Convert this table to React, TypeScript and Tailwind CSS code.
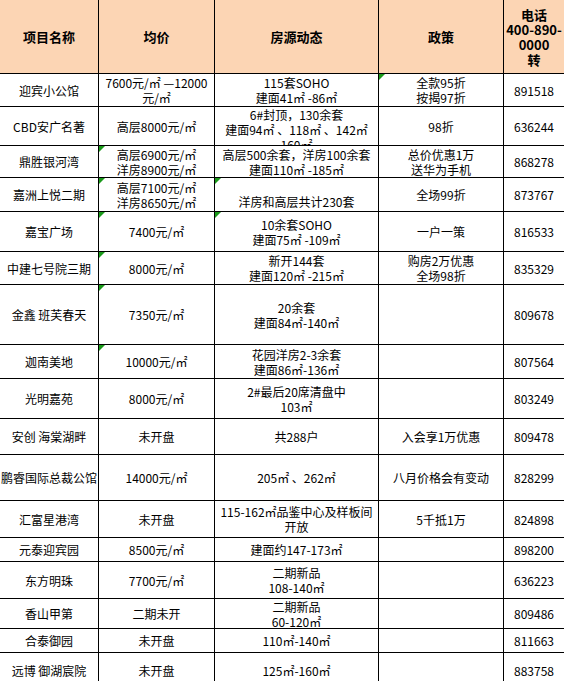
type Row = {
  h: string;
  name: string;
  price: string[];
  dyn: string[];
  policy: string[];
  tel: string;
  dynAlign?: string;
  marks?: number[];
};

const rows: Row[] = [
  { h: "h-[33px]", name: "迎宾小公馆", price: ["7600元/㎡ —12000", "元/㎡"], dyn: ["115套SOHO", "建面41㎡ -86㎡"], policy: ["全款95折", "按揭97折"], tel: "891518", marks: [3] },
  { h: "h-[39px]", name: "CBD安广名著", price: ["高层8000元/㎡"], dyn: ["6#封顶，130余套", "建面94㎡ 、118㎡ 、142㎡", "160㎡"], dynAlign: "items-start", policy: ["98折"], tel: "636244" },
  { h: "h-[32px]", name: "鼎胜银河湾", price: ["高层6900元/㎡", "洋房8900元/㎡"], dyn: ["高层500余套，洋房100余套", "建面110㎡ -185㎡"], policy: ["总价优惠1万", "送华为手机"], tel: "868278", marks: [1] },
  { h: "h-[34px]", name: "嘉洲上悦二期", price: ["高层7100元/㎡", "洋房8650元/㎡"], dyn: ["洋房和高层共计230套"], dynAlign: "items-end pb-[2px]", policy: ["全场99折"], tel: "873767", marks: [1, 2] },
  { h: "h-[40px]", name: "嘉宝广场", price: ["7400元/㎡"], dyn: ["10余套SOHO", "建面75㎡ -109㎡"], policy: ["一户一策"], tel: "816533", marks: [1, 2] },
  { h: "h-[33px]", name: "中建七号院三期", price: ["8000元/㎡"], dyn: ["新开144套", "建面120㎡ -215㎡"], policy: ["购房2万优惠", "全场98折"], tel: "835329", marks: [1] },
  { h: "h-[60px]", name: "金鑫 班芙春天", price: ["7350元/㎡"], dyn: ["20余套", "建面84㎡-140㎡"], policy: [], tel: "809678", marks: [1] },
  { h: "h-[34px]", name: "迦南美地", price: ["10000元/㎡"], dyn: ["花园洋房2-3余套", "建面86㎡-136㎡"], policy: [], tel: "807564", marks: [1] },
  { h: "h-[40px]", name: "光明嘉苑", price: ["8000元/㎡"], dyn: ["2#最后20席清盘中", "103㎡"], policy: [], tel: "803249" },
  { h: "h-[36px]", name: "安创 海棠湖畔", price: ["未开盘"], dyn: ["共288户"], policy: ["入会享1万优惠"], tel: "809478" },
  { h: "h-[46px]", name: "鹏睿国际总裁公馆", price: ["14000元/㎡"], dyn: ["205㎡ 、262㎡"], policy: ["八月价格会有变动"], tel: "828299" },
  { h: "h-[37px]", name: "汇富星港湾", price: ["未开盘"], dyn: ["115-162㎡品鉴中心及样板间", "开放"], policy: ["5千抵1万"], tel: "824898" },
  { h: "h-[24px]", name: "元泰迎宾园", price: ["8500元/㎡"], dyn: ["建面约147-173㎡"], policy: [], tel: "898200" },
  { h: "h-[37px]", name: "东方明珠", price: ["7700元/㎡"], dyn: ["二期新品", "108-140㎡"], policy: [], tel: "636223" },
  { h: "h-[30px]", name: "香山甲第", price: ["二期未开"], dyn: ["二期新品", "60-120㎡"], policy: [], tel: "809486" },
  { h: "h-[24px]", name: "合泰御园", price: ["未开盘"], dyn: ["110㎡-140㎡"], policy: [], tel: "811663" },
  { h: "h-[36px]", name: "远博 御湖宸院", price: ["未开盘"], dyn: ["125㎡-160㎡"], policy: [], tel: "883758" },
];

const widths = ["w-[99px]", "w-[116px]", "w-[164px]", "w-[125px]", "w-[60px]"];

function Mark() {
  return (
    <span className="absolute left-0 top-0 w-0 h-0 border-t-[6px] border-r-[6px] border-t-[#1a9a1a] border-r-transparent" />
  );
}

function Cell({ col, lines, align, mark }: { col: number; lines: string[]; align?: string; mark?: boolean }) {
  return (
    <div
      className={`relative ${widths[col]} shrink-0 h-full overflow-hidden flex justify-center ${align ?? "items-center"} ${col < 4 ? "border-r border-black" : ""}`}
    >
      {mark && <Mark />}
      <div className="flex flex-col items-center">
        {lines.map((l, i) => (
          <span key={i} className="block whitespace-nowrap leading-[15px]">
            {l}
          </span>
        ))}
      </div>
    </div>
  );
}

export default function App() {
  const head = ["项目名称", "均价", "房源动态", "政策"];
  return (
    <div className="w-[564px] h-[681px] overflow-hidden bg-white text-black text-[12px] font-['Noto_Sans_CJK_SC',sans-serif]">
      <div className="flex h-[74px] bg-[#fcd5b4] border-b border-black font-bold text-[13px]">
        {head.map((t, i) => (
          <div key={i} className={`${widths[i]} shrink-0 h-full flex items-center justify-center border-r border-black`}>
            {t}
          </div>
        ))}
        <div className={`${widths[4]} shrink-0 h-full flex flex-col items-center justify-center leading-[15px]`}>
          <span>电话</span>
          <span>400-890-</span>
          <span>0000</span>
          <span>转</span>
        </div>
      </div>
      {rows.map((r, i) => (
        <div key={i} className={`flex ${r.h} border-b border-black`}>
          <Cell col={0} lines={[r.name]} />
          <Cell col={1} lines={r.price} mark={r.marks?.includes(1)} />
          <Cell col={2} lines={r.dyn} align={r.dynAlign} mark={r.marks?.includes(2)} />
          <Cell col={3} lines={r.policy} mark={r.marks?.includes(3)} />
          <Cell col={4} lines={[r.tel]} />
        </div>
      ))}
    </div>
  );
}
